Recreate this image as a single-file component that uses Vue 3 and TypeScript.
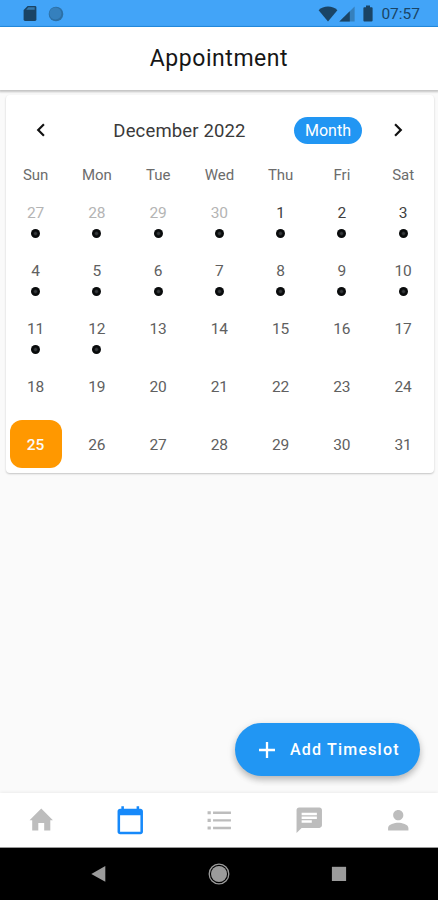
<script setup lang="ts">
interface Day {
  label: number
  outside: boolean
  event: boolean
  selected: boolean
}

const weekdays: string[] = ['Sun', 'Mon', 'Tue', 'Wed', 'Thu', 'Fri', 'Sat']

const days: Day[] = Array.from({ length: 35 }, (_, i) => {
  const outside = i < 4
  const label = outside ? 27 + i : i - 3
  return { label, outside, event: i < 16, selected: label === 25 && !outside }
})
</script>

<template>
  <div class="screen">
    <div class="status">
      <div class="status-left">
        <svg class="sd" viewBox="0 0 14 17"><path d="M4.6 1H12a1.4 1.4 0 0 1 1.4 1.4v12.2A1.4 1.4 0 0 1 12 16H2a1.4 1.4 0 0 1-1.4-1.4V5z" fill="#1a4465" /><path d="M5.3 2.2h6.4v2.6H3.2z" fill="#3479ae" /></svg>
        <svg class="disc" viewBox="0 0 16 16"><circle cx="8" cy="8" r="7.3" fill="#2c6fa5" /><circle cx="7.4" cy="7.4" r="6" fill="#3580bd" /></svg>
      </div>
      <div class="status-right">
        <svg class="wifi" viewBox="0 0 20 16"><path d="M10 15.6.6 4.2C3 1.9 6.3.6 10 .6s7 1.3 9.4 3.6z" fill="#1a4465" /></svg>
        <svg class="signal" viewBox="0 0 16 16"><path d="M15.6.4v15.2H.4z" fill="#3580bd" /><path d="M10.8 5.2v10.4H.4z" fill="#1a4465" /></svg>
        <svg class="battery" viewBox="0 0 10 17"><path d="M3 .5h4v1.7h1.7c.5 0 .9.4.9.9v12.5c0 .5-.4.9-.9.9H1.3c-.5 0-.9-.4-.9-.9V3.1c0-.5.4-.9.9-.9H3z" fill="#1a4465" /></svg>
        <span class="clock">07:57</span>
      </div>
    </div>

    <header class="appbar"><h1>Appointment</h1></header>

    <main class="content">
      <section class="card">
        <div class="cal-head">
          <svg class="chev" viewBox="0 0 24 24"><path d="M15.41 7.41 14 6l-6 6 6 6 1.41-1.41L10.83 12z" /></svg>
          <span class="month">December 2022</span>
          <button class="pill">Month</button>
          <svg class="chev" viewBox="0 0 24 24"><path d="M10 6 8.59 7.41 13.17 12l-4.58 4.59L10 18l6-6z" /></svg>
        </div>
        <div class="week">
          <span v-for="w in weekdays" :key="w">{{ w }}</span>
        </div>
        <div class="grid">
          <div v-for="(d, i) in days" :key="i" class="cell">
            <div class="day" :class="{ outside: d.outside, current: i > 3 && i < 7, selected: d.selected }">{{ d.label }}</div>
            <i v-if="d.event" class="dot"></i>
          </div>
        </div>
      </section>
      <button class="fab">
        <svg viewBox="0 0 18 18"><path d="M9 1v16M1 9h16" stroke="#fff" stroke-width="2.3" /></svg>
        <span>Add Timeslot</span>
      </button>
    </main>

    <nav class="tabs">
      <svg viewBox="0 0 30 30"><path d="M15 3.5 26.500 14.900H23.900V25.200H17.900V17.600H12.100V25.200H6.100V14.900H3.500z" /></svg>
      <svg class="active" viewBox="0 0 24 24"><path d="M20 3h-1V1h-2v2H7V1H5v2H4c-1.100 0-2 .9-2 2v16c0 1.100.9 2 2 2h16c1.100 0 2-.9 2-2V5c0-1.100-.9-2-2-2zm0 18H4V8h16v13z" /></svg>
      <svg viewBox="0 0 30 30"><path d="M3.500 6.200h3.200v3H3.500zM3.500 13.600h3.200v3H3.500zM3.500 21.100h3.200v3H3.500zM8.900 6.500h17.600v2.400H8.900zM8.900 13.900h17.600v2.400H8.900zM8.900 21.400h17.600v2.400H8.900z" /></svg>
      <svg viewBox="0 0 24 24"><path d="M20 2H4c-1.100 0-1.990.9-1.990 2L2 22l4-4h14c1.100 0 2-.9 2-2V4c0-1.100-.9-2-2-2zM6 9h12v2H6V9zm8 5H6v-2h8v2zm4-6H6V6h12v2z" /></svg>
      <svg viewBox="0 0 24 24"><path d="M12 12c2.210 0 4-1.790 4-4s-1.790-4-4-4-4 1.790-4 4 1.790 4 4 4zm0 2c-2.670 0-8 1.340-8 4v2h16v-2c0-2.660-5.330-4-8-4z" /></svg>
    </nav>

    <div class="system">
      <svg viewBox="0 0 22 22"><path d="M17.300 3.100v15.600L3.300 10.900z" fill="#9b9b9b" /></svg>
      <svg viewBox="0 0 22 22"><circle cx="11" cy="11" r="9.800" fill="none" stroke="#9b9b9b" stroke-width="1.300" /><circle cx="11" cy="11" r="8" fill="#9b9b9b" /></svg>
      <svg viewBox="0 0 22 22"><path d="M3.900 3.800h14.200v14.200H3.900z" fill="#9b9b9b" /></svg>
    </div>
  </div>
</template>

<style>
body { margin: 0; }
</style>

<style scoped>
.screen {
  width: 438px;
  height: 900px;
  display: flex;
  flex-direction: column;
  background: #fafafa;
  font-family: Roboto, "Liberation Sans", sans-serif;
  overflow: hidden;
}
.screen * { box-sizing: border-box; }
svg { display: block; flex: none; }
button { border: 0; font-family: inherit; }
.status {
  flex: none;
  height: 27px;
  background: #42a4f8;
  border-bottom: 1px solid #2593ec;
  display: flex;
  justify-content: space-between;
  align-items: center;
  padding: 1px 18px 0 23px;
}
.status-left, .status-right { display: flex; align-items: center; }
.sd { width: 14px; height: 17px; margin-right: 11px; }
.disc { width: 16px; height: 16px; }
.wifi { width: 20px; height: 16px; margin-right: 1px; }
.signal { width: 16px; height: 16px; margin-right: 8px; }
.battery { width: 10px; height: 17px; margin-right: 8px; }
.clock { font-size: 15.5px; line-height: 18px; color: #1a4465; padding-top: 1px; }
.appbar {
  flex: none;
  height: 63px;
  background: #fff;
  box-shadow: 0 1px 2px 1px rgba(0, 0, 0, 0.22);
  display: flex;
  align-items: center;
  justify-content: center;
  position: relative;
}
h1 {
  margin: 0;
  font-size: 23px;
  line-height: 28px;
  font-weight: 400;
  letter-spacing: 0.55px;
  color: #161616;
}
.content {
  flex: 1;
  min-height: 0;
  display: flex;
  flex-direction: column;
  justify-content: space-between;
  padding: 5px 4px 17px 6px;
}
.card {
  height: 378px;
  background: #fff;
  border-radius: 4px;
  box-shadow: 0 1px 2px rgba(0, 0, 0, 0.22);
}
.cal-head {
  height: 70px;
  display: flex;
  align-items: center;
  padding: 0 23px 0 22px;
}
.chev { width: 26px; height: 26px; fill: #111; }
.month {
  flex: 1;
  text-align: center;
  font-size: 18.5px;
  line-height: 22px;
  letter-spacing: 0.15px;
  color: #3a3a3a;
  padding: 1px 0 0 11px;
}
.pill {
  width: 68px;
  height: 27px;
  border-radius: 14px;
  background: #2196f3;
  color: #fff;
  font-size: 16px;
  line-height: 27px;
  padding: 0;
  margin-right: 23px;
}
.week, .grid {
  display: grid;
  grid-template-columns: repeat(7, 61.25px);
  margin-left: -1px;
}
.week { height: 18px; font-size: 15px; line-height: 20px; text-align: center; color: #6c6c6c; }
.grid { grid-auto-rows: 58px; }
.cell { position: relative; display: flex; align-items: center; justify-content: center; }
.day {
  width: 52px;
  height: 48px;
  border-radius: 12px;
  font-size: 15.5px;
  line-height: 50px;
  text-align: center;
  color: #606060;
}
.day.current { color: #404040; }
.day.outside { color: #b4b4b4; }
.day.selected { background: #ff9800; color: #fafafa; font-weight: 500; }
.dot {
  position: absolute;
  bottom: 3.5px;
  width: 9px;
  height: 9px;
  border-radius: 50%;
  background: radial-gradient(#36393c 0 14%, #090b0c 38%);
}
.fab {
  align-self: flex-end;
  width: 185px;
  height: 53px;
  margin-right: 14px;
  border-radius: 27px;
  background: #2196f3;
  color: #fff;
  display: flex;
  align-items: center;
  padding: 0 0 0 23px;
  font-size: 16px;
  font-weight: 500;
  letter-spacing: 1.2px;
  box-shadow: 0 4px 6px rgba(0, 0, 0, 0.2), 0 2px 10px rgba(0, 0, 0, 0.1);
}
.fab svg { width: 18px; height: 18px; margin-right: 14px; }
.tabs {
  flex: none;
  height: 55px;
  background: #fff;
  border-bottom: 1px solid #999;
  box-shadow: 0 -1px 3px rgba(0, 0, 0, 0.06);
  display: flex;
  justify-content: space-between;
  align-items: center;
  padding: 0 24.5px 0 25.5px;
}
.tabs svg { width: 30.5px; height: 30.5px; fill: #bdbdbd; }
.tabs svg.active { fill: #1689fa; }
.system {
  flex: none;
  height: 52px;
  background: #000;
  display: flex;
  justify-content: space-between;
  align-items: center;
  padding: 0 88px;
}
.system svg { width: 22px; height: 22px; }
</style>
